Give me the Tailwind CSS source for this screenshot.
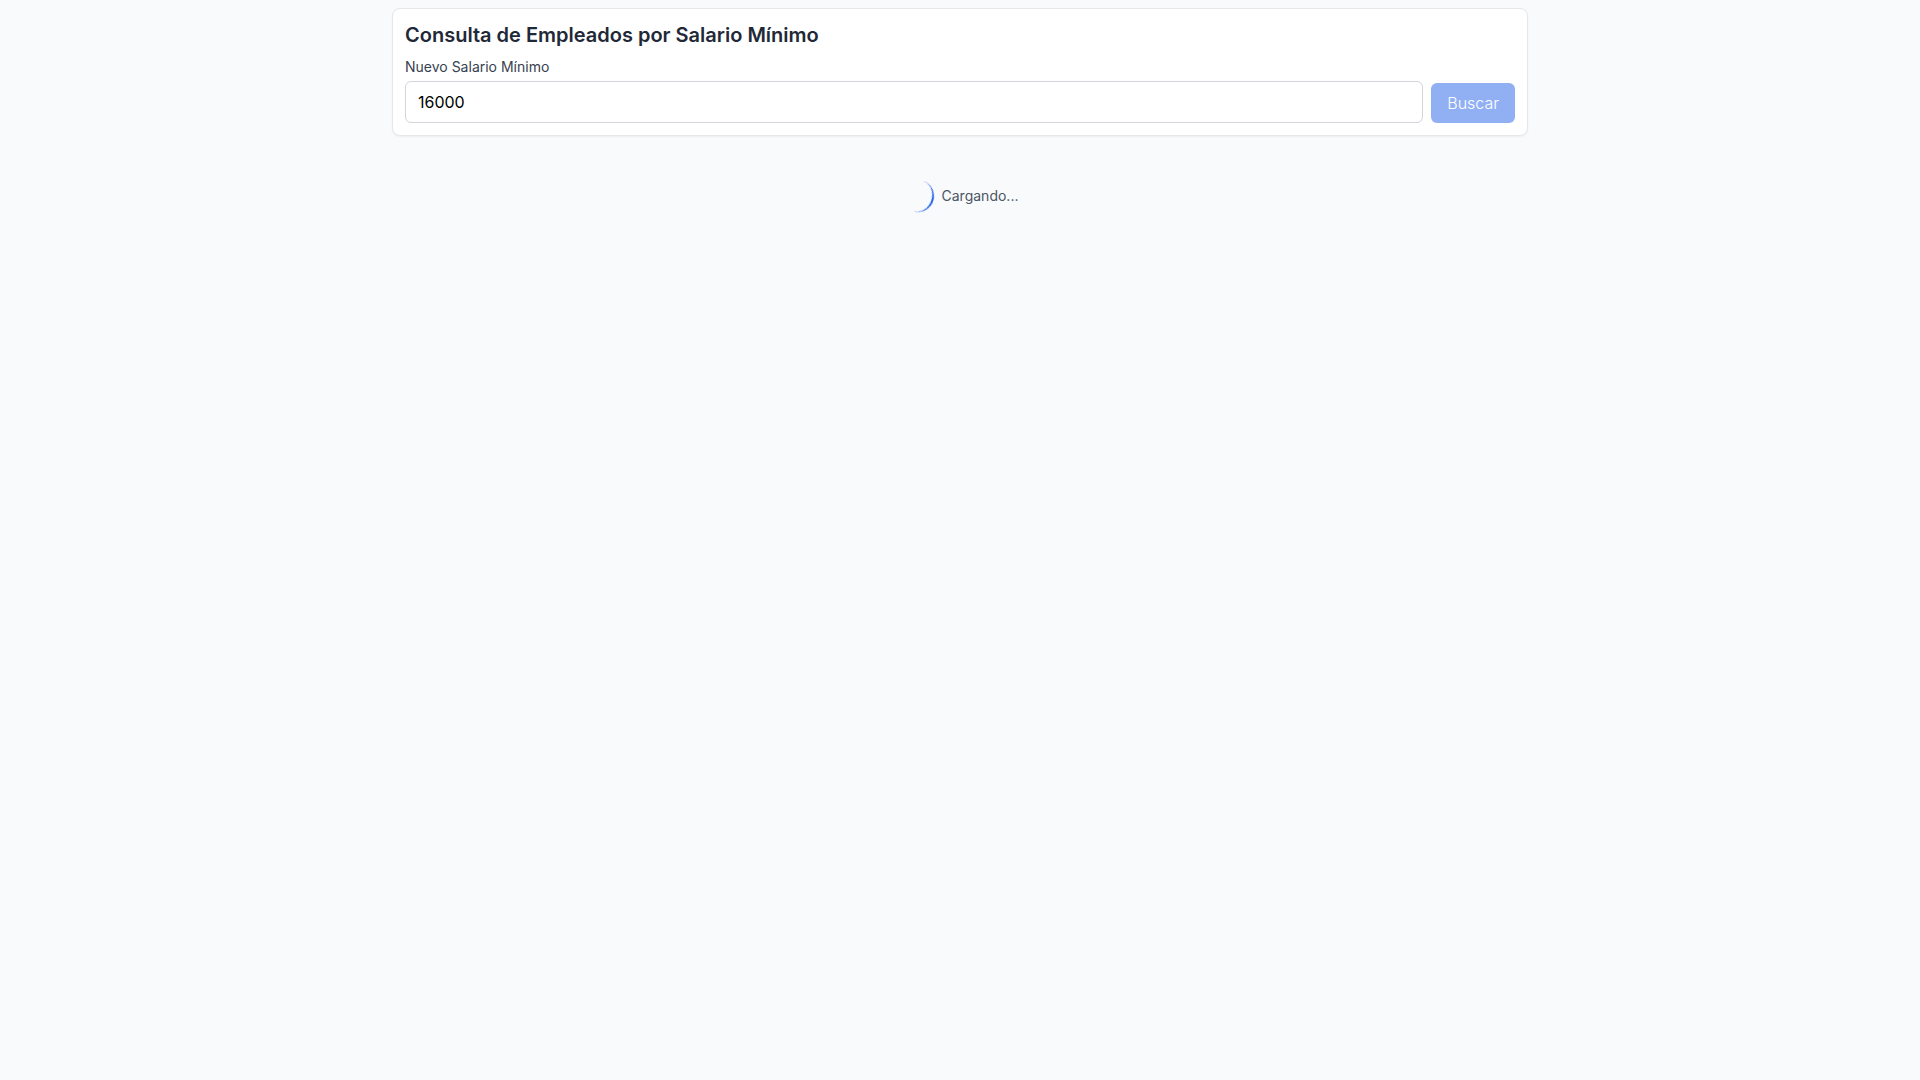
<!DOCTYPE html>
<html lang="es">
<head>
    <meta charset="UTF-8">
    <meta name="viewport" content="width=device-width, initial-scale=1.0">
    <title>Consulta de Empleados</title>
    <script src="https://cdn.jsdelivr.net/npm/@tailwindcss/browser@4"></script>
</head>
<body class="min-h-screen bg-[#f9fafb] font-[Inter,sans-serif]">
    <main class="max-w-6xl mx-auto p-2">
        <!-- Formulario de consulta -->
        <section class="bg-white border border-[#e5e7eb] rounded-lg shadow-[0_1px_2px_0_rgba(0,0,0,0.05)] p-3 mb-3">
            <h1 class="text-xl font-semibold text-[#1f2937] mb-2">Consulta de Empleados por Salario Mínimo</h1>
            <form class="flex items-end gap-2">
                <div class="flex-1">
                    <label for="salario" class="block text-sm font-normal text-[#374151] mb-1">Nuevo Salario Mínimo</label>
                    <input id="salario" type="number" value="16000" class="block w-full border border-[#d1d5db] rounded-md px-3 py-2 text-black">
                </div>
                <button type="submit" disabled class="bg-[#2563eb] text-white font-light rounded-md px-4 py-2 opacity-50">Buscar</button>
            </form>
        </section>

        <!-- Estado de carga -->
        <div class="flex items-center justify-center py-8" role="status">
            <div class="w-8 h-8 rounded-full border-b-2 border-[#2563eb] rotate-[-72deg] will-change-transform"></div>
            <span class="ml-2 text-sm text-[#4b5563]">Cargando...</span>
        </div>
    </main>
</body>
</html>
